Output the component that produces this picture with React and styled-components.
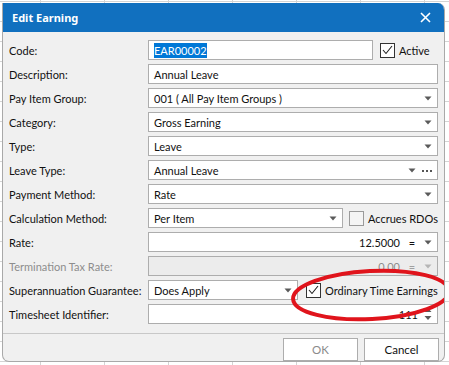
import styled, { createGlobalStyle } from "styled-components";

const Global = createGlobalStyle`
  html, body {
    margin: 0;
    padding: 0;
    background-color: #ffffff;
  }
  body {
    width: 449px;
    height: 365px;
    overflow: hidden;
    font-family: Lato, "Noto Sans", "Liberation Sans", sans-serif;
    font-size: 11px;
    color: #111111;
    background-image:
      linear-gradient(to right, #d4d4d4 1px, transparent 1px),
      linear-gradient(to bottom, #d4d4d4 1px, transparent 1px);
    background-size: 64px 20px, 64px 20px;
    background-position: 40px 1px, 0 1px;
  }
`

const Window = styled.div`
  position: relative;
  margin: 3px 0 0 2px;
  width: 443px;
  height: 359px;
  box-sizing: border-box;
  display: flex;
  flex-direction: column;
  background-color: #f0f0f0;
  border: 1px solid #a9a9a9;
  border-top: none;
  border-radius: 0 7px 7px 7px;
  overflow: hidden;
`

const TitleBar = styled.div`
  height: 29px;
  flex: none;
  display: flex;
  align-items: center;
  justify-content: space-between;
  padding: 0 14px 0 10px;
  background-color: #1170bf;
  color: #ffffff;
  font-family: "Noto Sans", sans-serif;
  font-weight: 700;
  font-size: 11px;
  margin: 0 -1px;
`

const Form = styled.div`
  display: grid;
  grid-template-columns: 139px minmax(0, 1fr);
  grid-auto-rows: 20px;
  row-gap: 4px;
  align-items: center;
  padding: 8px 6px 0 6px;
`

const Label = styled.div`
  white-space: nowrap;
  color: ${({ $disabled }) => $disabled ? '#8d8d8d' : '#111111'};
`

const Field = styled.div`
  display: flex;
  align-items: center;
  height: 20px;
  min-width: 0;
  gap: ${({ $gap }) => $gap || 0}px;
`

const Box = styled.div`
  box-sizing: border-box;
  height: 20px;
  min-width: 0;
  width: ${({ $w }) => $w ? `${$w}px` : 'auto'};
  flex: ${({ $w }) => $w ? 'none' : '1'};
  display: flex;
  align-items: center;
  gap: 6px;
  padding: 0 5px;
  background-color: ${({ $disabled }) => $disabled ? '#ececec' : '#ffffff'};
  border: 1px solid #adadad;
  white-space: nowrap;
`

const Value = styled.span`
  flex: 1;
  min-width: 0;
  text-align: ${({ $right }) => $right ? 'right' : 'left'};
  color: ${({ $disabled }) => $disabled ? '#8d8d8d' : '#111111'};
`

const Selected = styled.span`
  background-color: #0078d7;
  color: #ffffff;
  padding: 1px 0;
`

const Eq = styled.span`
  width: 12px;
  text-align: center;
  color: ${({ $disabled }) => $disabled ? '#a0a0a0' : '#111111'};
`

const Check = styled.div`
  box-sizing: border-box;
  width: 15px;
  height: 15px;
  flex: none;
  display: flex;
  align-items: center;
  justify-content: center;
  background-color: ${({ $checked }) => $checked ? '#ffffff' : '#f4f4f4'};
  border: 1px solid ${({ $checked }) => $checked ? '#333333' : '#9a9a9a'};
`

const CheckLabel = styled.span`
  white-space: nowrap;
  margin-left: ${({ $shift }) => $shift || 0}px;
`

const Footer = styled.div`
  margin-top: auto;
  height: 28px;
  box-sizing: border-box;
  border-top: 1px solid #c8c8c8;
  display: flex;
  justify-content: flex-end;
  align-items: flex-start;
  gap: 6px;
  padding: 4px 5px 0 0;
`

const Button = styled.button`
  width: 75px;
  height: 23px;
  box-sizing: border-box;
  background-color: #ffffff;
  border: 1px solid #adadad;
  font-family: inherit;
  font-size: 11.5px;
  color: ${({ disabled }) => disabled ? '#8a8a8a' : '#111111'};
  padding: 0;
`

const Circle = styled.svg`
  position: absolute;
  left: 285px;
  top: 263px;
  pointer-events: none;
`

const Arrow = ({ disabled }) => (
  <svg width="8" height="5" viewBox="0 0 8 5">
    <path d="M0.5 0.5 H7.5 L4 4.5 Z" fill={disabled ? '#b5b5b5' : '#5a5a5a'} />
  </svg>
)

const Dots = () => (
  <svg width="10" height="3" viewBox="0 0 10 3">
    <rect x="0" y="1" width="2" height="2" fill="#555" />
    <rect x="4" y="1" width="2" height="2" fill="#555" />
    <rect x="8" y="1" width="2" height="2" fill="#555" />
  </svg>
)

const Spin = () => (
  <svg width="8" height="14" viewBox="0 0 8 14">
    <path d="M0.5 5 H7.5 L4 1 Z" fill="#5a5a5a" />
    <path d="M0.5 9 H7.5 L4 13 Z" fill="#5a5a5a" />
  </svg>
)

const Tick = () => (
  <svg width="11" height="10" viewBox="0 0 11 10">
    <path d="M1 5 L4 8.5 L10 1" fill="none" stroke="#222" strokeWidth="1.1" />
  </svg>
)

const Close = () => (
  <svg width="11" height="11" viewBox="0 0 11 11">
    <path d="M1 1 L10 10 M10 1 L1 10" stroke="#fff" strokeWidth="1.6" />
  </svg>
)

const Dropdown = ({ value, w, extra }) => (
  <Box $w={w}>
    <Value>{value}</Value>
    <Arrow />
    {extra}
  </Box>
)

const App = () => {
  return (
    <>
      <Global />
      <Window>
        <TitleBar>
          <span>Edit Earning</span>
          <Close />
        </TitleBar>
        <Form>
          <Label>Code:</Label>
          <Field $gap={7}>
            <Box $w={225}><Value><Selected>EAR00002</Selected></Value></Box>
            <Check $checked><Tick /></Check>
            <CheckLabel $shift={-3}>Active</CheckLabel>
          </Field>

          <Label>Description:</Label>
          <Field><Box><Value>Annual Leave</Value></Box></Field>

          <Label>Pay Item Group:</Label>
          <Field><Dropdown value="001  ( All Pay Item Groups )" /></Field>

          <Label>Category:</Label>
          <Field><Dropdown value="Gross Earning" /></Field>

          <Label>Type:</Label>
          <Field><Dropdown value="Leave" /></Field>

          <Label>Leave Type:</Label>
          <Field><Dropdown value="Annual Leave" extra={<Dots />} /></Field>

          <Label>Payment Method:</Label>
          <Field><Dropdown value="Rate" /></Field>

          <Label>Calculation Method:</Label>
          <Field $gap={6}>
            <Dropdown value="Per Item" w={195} />
            <Check />
            <CheckLabel $shift={-2}>Accrues RDOs</CheckLabel>
          </Field>

          <Label>Rate:</Label>
          <Field>
            <Box>
              <Value $right>12.5000</Value>
              <Eq>=</Eq>
              <Arrow />
            </Box>
          </Field>

          <Label $disabled>Termination Tax Rate:</Label>
          <Field>
            <Box $disabled>
              <Value $right $disabled>0.00</Value>
              <Eq $disabled>=</Eq>
              <Arrow disabled />
            </Box>
          </Field>

          <Label>Superannuation Guarantee:</Label>
          <Field $gap={8}>
            <Dropdown value="Does Apply" w={150} />
            <Check $checked><Tick /></Check>
            <CheckLabel $shift={-4}>Ordinary Time Earnings</CheckLabel>
          </Field>

          <Label>Timesheet Identifier:</Label>
          <Field>
            <Box>
              <Value $right>111</Value>
              <Spin />
            </Box>
          </Field>
        </Form>
        <Footer>
          <Button disabled>OK</Button>
          <Button>Cancel</Button>
        </Footer>
        <Circle width="166" height="58" viewBox="0 0 166 58">
          <ellipse cx="83" cy="29" rx="78" ry="24" fill="none" stroke="#e0141c" strokeWidth="4" transform="rotate(-3 83 29)" />
        </Circle>
      </Window>
    </>
  );
}

export default App;
